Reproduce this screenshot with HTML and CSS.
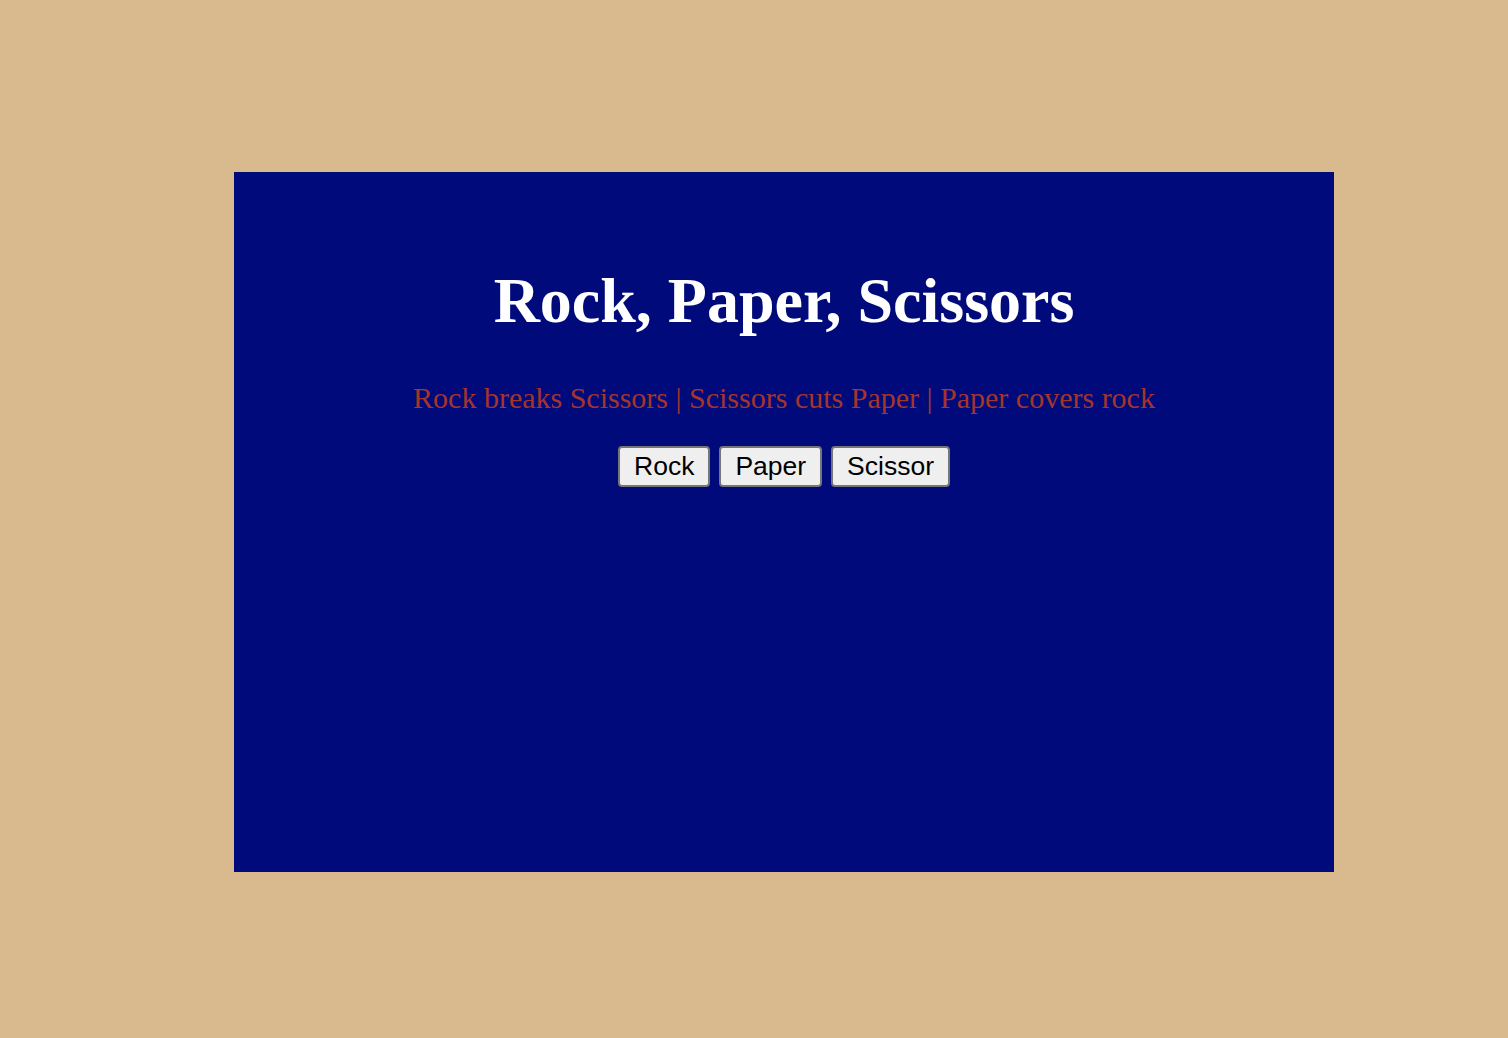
FILE: index.html
```html
<!DOCTYPE html>
<html>
<head>
<meta charset="utf-8">
<title>Rock, Paper, Scissors</title>
<link rel="stylesheet" href="styles.css">
</head>
<body>
<div class="panel">
  <h1 class="title">Rock, Paper, Scissors</h1>
  <p class="rules">Rock breaks Scissors | Scissors cuts Paper | Paper covers rock</p>
  <div class="choices">
    <button class="choice">Rock</button>
    <button class="choice">Paper</button>
    <button class="choice">Scissor</button>
  </div>
</div>
</body>
</html>
```

FILE: styles.css
```css
html, body {
  margin: 0;
  padding: 0;
}
body {
  background: #d9ba8f;
  height: 1038px;
  overflow: hidden;
}
.panel {
  box-sizing: border-box;
  width: 1100px;
  height: 700px;
  margin: 172px 0 0 234px;
  background: #010a7b;
  text-align: center;
  padding-top: 92px;
  display: flex;
  flex-direction: column;
  align-items: center;
}
.title {
  margin: 0;
  font-family: "Liberation Serif", "Times New Roman", serif;
  font-weight: bold;
  font-size: 64px;
  line-height: 74px;
  color: #ffffff;
}
.rules {
  margin: 43px 0 0 0;
  font-family: "Liberation Serif", "Times New Roman", serif;
  font-size: 30px;
  line-height: 34px;
  color: #a5352a;
}
.choices {
  margin-top: 31px;
  display: flex;
  gap: 9px;
}
.choice {
  font-family: "Liberation Sans", Arial, sans-serif;
  font-size: 26.5px;
  height: 41px;
  padding: 0 14px;
  background: #efefef;
  color: #000;
  border: 2px solid #767676;
  border-radius: 4px;
}
```
